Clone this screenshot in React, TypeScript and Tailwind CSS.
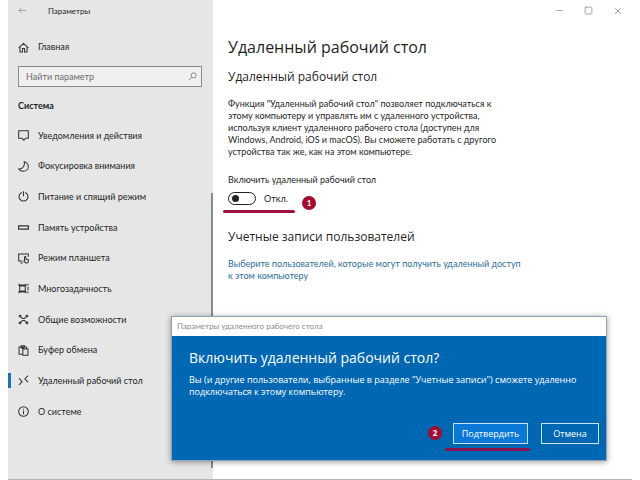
import React from 'react';
import { Minus, Square, X } from 'lucide-react';

const icons: Record<string, React.ReactNode> = {
  notifications: <path d="M1 1h14v11h-4l-2.500 3L6 12H1z" />,
  focus: <path d="M9 1c4 1 6 3.800 6 7 0 4.200-3.200 7-7.200 7-3 0-5.500-1.300-6.800-3.500 5.500 1 9.500-5 8-10.500z" />,
  power: <path d="M5.500 2.200A6.500 6.500 0 1 0 10.500 2.200M8 .5v7" />,
  storage: <path d="M.8 5.700h14.400v4.600H.8z" strokeWidth="2" />,
  tablet: <path d="M6.500 11.500H1v-10h14v4M3.500 14.500h3.500M9.500 9.500V6a1 1 0 0 1 2 0v3l3.500.7v2.800c0 1.200-.7 2-2 2h-1.500L8.500 12l1-1z" />,
  multitask: <path d="M2.500 4.500h8v7h-8zM1.500 1v3.500M11.500 1v3.500M1.500 11.500V15M11.500 11.500V15M1.500 2.800h10M1.500 13.200h10M14.500 1v2.500M14.500 5.500v5M14.500 12.500V15" />,
  shared: (
    <>
      <path d="M4 4l2.500 2.500h3L12 4M4 12l2.500-2.500h3L12 12" />
      <circle cx="3" cy="3" r="1.300" />
      <circle cx="13" cy="3" r="1.300" />
      <circle cx="3" cy="13" r="1.300" />
      <circle cx="13" cy="13" r="1.300" />
    </>
  ),
  clipboard: <path d="M6.500 13.500H1.500V3h11v2.500M4.500 3V1.200h5V3M7 5.800h7.500v9H7zM4.500 3v1.500h5" />,
  remote: <path d="M1.500 5l4.500 4.700L1.500 14.500M14.500 1L10 5.700l4.500 4.800" />,
  about: <path d="M8 1a7 7 0 1 0 0 14A7 7 0 1 0 8 1M8 7v5M8 4v1.500" />,
  home: <path d="M1 8.500L8 2l7 6.500M2.800 7v7.500h3.700v-5h3v5h3.700V7" />,
  search: <path d="M10 1.500a4.500 4.500 0 1 0 0 9 4.500 4.500 0 1 0 0-9M6.800 9.200L1.500 14.500" />,
  back: <path d="M14.500 8H1.500M6 3.500L1.500 8 6 12.500" />,
};

const navItems = [
  { icon: 'notifications', label: 'Уведомления и действия' },
  { icon: 'focus', label: 'Фокусировка внимания' },
  { icon: 'power', label: 'Питание и спящий режим' },
  { icon: 'storage', label: 'Память устройства' },
  { icon: 'tablet', label: 'Режим планшета' },
  { icon: 'multitask', label: 'Многозадачность' },
  { icon: 'shared', label: 'Общие возможности' },
  { icon: 'clipboard', label: 'Буфер обмена' },
  { icon: 'remote', label: 'Удаленный рабочий стол', active: true },
  { icon: 'about', label: 'О системе' },
];

function Icon({ name, className = 'size-[11px] text-[#333]' }: { name: string; className?: string }) {
  return (
    <svg viewBox="0 0 16 16" fill="none" stroke="currentColor" strokeWidth="1.500" className={`shrink-0 ${className}`}>
      {icons[name]}
    </svg>
  );
}

function Badge({ children }: { children: React.ReactNode }) {
  return (
    <span className="flex size-[14px] shrink-0 items-center justify-center rounded-full bg-[#a50a31] text-[8px] leading-none font-bold text-white">
      {children}
    </span>
  );
}

function Sidebar() {
  return (
    <aside className="relative w-[205px] shrink-0 bg-[#e6e6e6]">
      <div className="flex h-[21px] items-center">
        <button aria-label="Назад" className="ml-[10px] w-[30px] text-[#999]">
          <Icon name="back" className="size-[9px]" />
        </button>
        <span className="text-[8px]">Параметры</span>
      </div>
      <a href="#home" className="mt-[18px] flex h-4 items-center gap-[9px] pl-[10px]">
        <Icon name="home" />
        Главная
      </a>
      <div className="mt-[11px] mr-[11px] ml-[10px] flex h-[21px] items-center border border-[#8a8a8a] bg-[#f0f0f0] pr-1 pl-[7px]">
        <input
          type="text"
          aria-label="Найти параметр"
          placeholder="Найти параметр"
          className="w-full min-w-0 bg-transparent outline-none placeholder:text-[#6b6b6b]"
        />
        <Icon name="search" className="size-[9px] text-[#777]" />
      </div>
      <h2 className="mt-[11px] pl-[10px] leading-4 font-bold">Система</h2>
      <nav className="mt-[6px] grid h-[307px] auto-rows-fr">
        {navItems.map((item) => (
          <a
            key={item.label}
            href={`#${item.icon}`}
            aria-current={item.active ? 'page' : undefined}
            className="relative flex items-center gap-[9px] pl-[10px]"
          >
            {item.active && <span className="absolute left-0 h-[15px] w-[3px] bg-[#1a6fb8]" />}
            <Icon name={item.icon} />
            {item.label}
          </a>
        ))}
      </nav>
      <div className="absolute top-[193px] right-0 bottom-[11px] w-[2px] bg-[#8b8b8b]" />
    </aside>
  );
}

function Content() {
  return (
    <main className="min-w-0 flex-1">
      <div className="flex h-[21px] items-center justify-end gap-[20px] pr-[9px] text-[#8a8a8a]">
        <button aria-label="Свернуть"><Minus className="size-[9px]" /></button>
        <button aria-label="Развернуть"><Square className="size-[9px]" /></button>
        <button aria-label="Закрыть"><X className="size-[10px]" /></button>
      </div>
      <div className="pt-[14px] pl-[15px]">
        <h1 className="font-['Open_Sans',sans-serif] text-[16px] leading-6">Удаленный рабочий стол</h1>
        <h2 className="mt-[10px] font-['Open_Sans',sans-serif] text-[12px] leading-4">Удаленный рабочий стол</h2>
        <p className="mt-[13px] leading-3">
          Функция "Удаленный рабочий стол" позволяет подключаться к<br />
          этому компьютеру и управлять им с удаленного устройства,<br />
          используя клиент удаленного рабочего стола (доступен для<br />
          Windows, Android, iOS и macOS). Вы сможете работать с другого<br />
          устройства так же, как на этом компьютере.
        </p>
        <label htmlFor="remote-desktop" className="mt-4 block leading-3">
          Включить удаленный рабочий стол
        </label>
        <div className="mt-[5px] flex h-[15px] items-center">
          <input
            id="remote-desktop"
            type="checkbox"
            role="switch"
            className="h-[13px] w-7 appearance-none rounded-full border border-[#222] before:mt-[2px] before:ml-[3px] before:block before:size-[7px] before:rounded-full before:bg-[#222] checked:before:ml-4"
          />
          <span className="ml-2 w-[38px]">Откл.</span>
          <div className="pt-2"><Badge>1</Badge></div>
        </div>
        <div className="mt-[4px] -ml-[5px] h-[3px] w-[72px] rounded-full bg-[#a0103a]" />
        <h2 className="mt-4 font-['Open_Sans',sans-serif] text-[12px] leading-4">Учетные записи пользователей</h2>
        <a href="#users" className="mt-[13px] block leading-3 text-[#2b6f9c]">
          Выберите пользователей, которые могут получить удаленный доступ<br />
          к этом компьютеру
        </a>
      </div>
    </main>
  );
}

function ConfirmDialog() {
  return (
    <div
      role="dialog"
      aria-labelledby="dialog-title"
      className="absolute right-[33px] bottom-[19px] left-[171px] border border-[#8fa3b5] bg-[#0067b3] font-['Open_Sans',sans-serif] text-white shadow-[0_1px_6px_rgba(0,0,0,0.4)]"
    >
      <div className="h-[19px] bg-white pl-[5px] font-['Lato',sans-serif] text-[8px] leading-[18px] text-[#8a8a8a]">
        Параметры удаленного рабочего стола
      </div>
      <div className="pt-[10px] pr-[7px] pb-[9px] pl-[17px]">
        <h2 id="dialog-title" className="text-[14px] leading-6">Включить удаленный рабочий стол?</h2>
        <p className="mt-1 leading-3">
          Вы (и другие пользователи, выбранные в разделе "Учетные записи") сможете удаленно<br />
          подключаться к этому компьютеру.
        </p>
        <div className="mt-[25px] flex justify-end">
          <div className="mt-[3px] mr-[3px]"><Badge>2</Badge></div>
          <div className="mr-[11px] w-[85px]">
            <button className="ml-auto mr-[2px] block h-[21px] w-[75px] border border-[#c9e4f8] bg-[#0a78d7]">Подтвердить</button>
            <div className="mt-1 h-[3px] rounded-full bg-[#8c1450]" />
          </div>
          <button className="h-[21px] w-[58px] border border-[#c9e4f8]">Отмена</button>
        </div>
      </div>
    </div>
  );
}

export default function App() {
  return (
    <div className="relative min-h-screen bg-white px-2 font-['Lato','Open_Sans',sans-serif] text-[9px] text-[#1f1f1f]">
      <div className="flex min-h-screen border-b border-[#b5b5b5]">
        <Sidebar />
        <Content />
      </div>
      <ConfirmDialog />
    </div>
  );
}
